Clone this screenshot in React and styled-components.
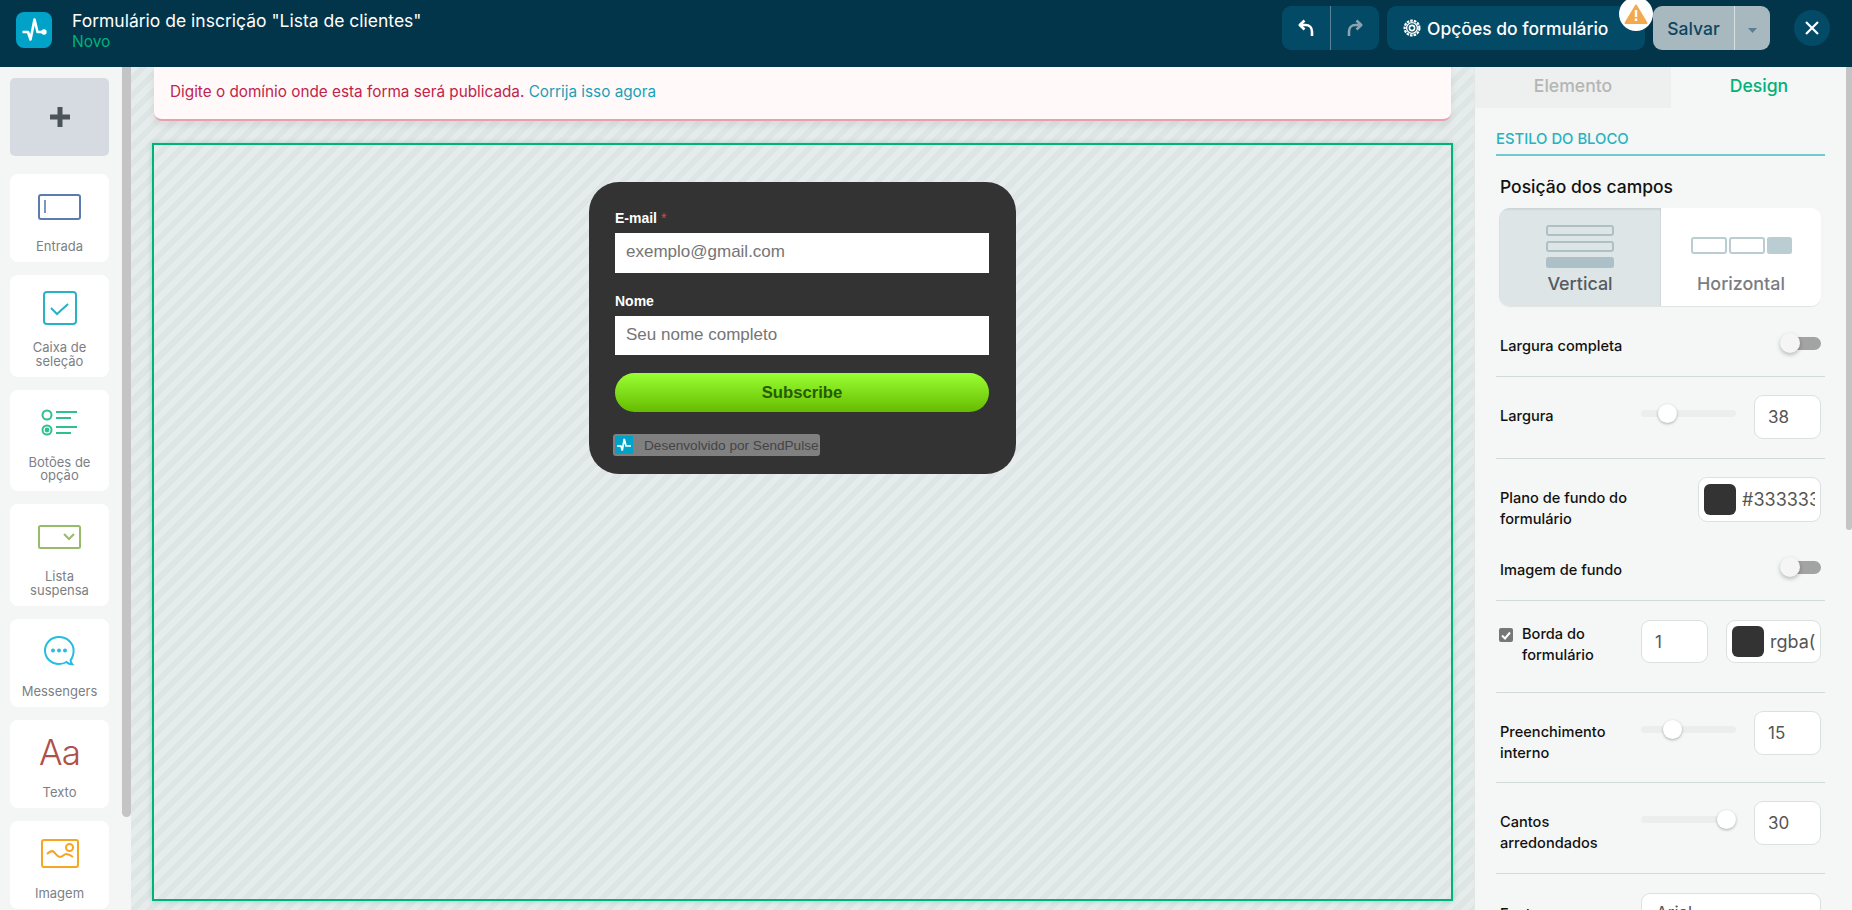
import React from 'react'
import styled, { createGlobalStyle } from 'styled-components'

const Global = createGlobalStyle`
html, body {margin:0; padding:0; height:100%; overflow:hidden;}
body {font-family:Inter, "Noto Sans", sans-serif; color:#111;}
* {box-sizing:border-box;}
`

const Page = styled.div`
width:100%; height:100vh; display:flex; flex-direction:column; overflow:hidden;
`

const Header = styled.header`
flex:0 0 67px; background:#02344a; display:flex; padding:6px 22px 0 16px;
`
const LogoBox = styled.div`
width:36px; height:36px; margin-top:6px; border-radius:8px; background:#00a3c7; flex:none;
svg {display:block;}
`
const Titles = styled.div`
margin-left:20px; flex:1; padding-top:4px;
h1 {margin:0; font-size:17.5px; line-height:22px; font-weight:400; color:#fff;}
span {display:block; font-size:15.5px; line-height:20px; color:#00b27a;}
`
const HeaderBtns = styled.div`
display:flex; gap:8px; height:44px;
`
const UndoGroup = styled.div`
width:97px; background:#034a66; border-radius:9px; display:flex;
`
const UndoBtn = styled.button`
flex:1; border:0; background:none; padding:0; display:flex; align-items:center; justify-content:center;
& + & {border-left:1px solid #5c8395;}
`
const OptionsBtn = styled.button`
position:relative; width:258px; background:#034a66; border:0; border-radius:9px; color:#fff;
font:500 17.5px Inter, sans-serif; display:flex; align-items:center; padding:0 0 0 16px; gap:6px; white-space:nowrap;
`
const WarnBadge = styled.div`
position:absolute; right:-8px; top:-9px; width:34px; height:34px; border-radius:50%; background:#fff;
display:flex; align-items:center; justify-content:center;
`
const SaveGroup = styled.div`
width:117px; background:#a8b8bf; border-radius:9px; display:flex;
`
const SaveBtn = styled.button`
flex:1; border:0; background:none; color:#0d4661; font:500 17.5px Inter, sans-serif; padding:0;
`
const SaveCaret = styled.button`
width:36px; border:0; border-left:1px solid #d8e0e3; background:none; padding:4px 0 0; display:flex; align-items:center; justify-content:center;
`
const CloseBtn = styled.button`
width:36px; height:36px; margin:4px 0 0 16px; border:0; border-radius:50%; background:#034a66; padding:0;
display:flex; align-items:center; justify-content:center;
`

const Body = styled.div`
flex:1; min-height:0; display:flex;
`

const Sidebar = styled.aside`
position:relative; flex:0 0 131px; background:#f4f6f5; padding:11px 22px 0 10px; display:flex; flex-direction:column; gap:13px;
&::after {content:""; position:absolute; top:0; right:0; width:9px; height:750px; background:#c4c4c4; border-radius:0 0 5px 5px;}
`
const AddBtn = styled.button`
flex:0 0 78px; margin-bottom:5px; border:0; border-radius:5px; background:#d5dbe0; display:flex; align-items:center; justify-content:center; padding:0;
`
const ToolCard = styled.div`
flex:none; background:#fff; border-radius:8px; padding-bottom:8.5px; text-align:center;
font-size:13px; line-height:13.5px; color:#7c7f85;
`
const ToolIcon = styled.div`
height:50px; margin:8px 0 8px; display:flex; align-items:center; justify-content:center;
`
const AaGlyph = styled.span`
font-size:35px; line-height:1; font-weight:300; color:#b0504b; letter-spacing:-1px;
`

const Canvas = styled.main`
flex:1; min-width:0; padding:0 21px;
background:repeating-linear-gradient(135deg, #e6ebeb 0 6px, #dee5e5 6px 12px);
`
const Notice = styled.div`
height:54px; margin:0 2px; padding:0 16px 4px; display:flex; align-items:center; background:#fffaf9;
border-bottom:2px solid #e8a0ae; border-radius:0 0 8px 8px; box-shadow:0 4px 8px rgba(0,0,0,.07);
font-size:15.3px; color:#c0234b; white-space:pre;
a {color:#1a9fb8; text-decoration:none;}
`
const Block = styled.section`
height:758px; margin-top:22px; border:2px solid #00b27a; box-shadow:0 0 5px rgba(0,178,122,.35); padding-top:37px;
`

const FormCard = styled.div`
width:427px; height:292px; margin:0 auto; background:#333; border-radius:30px; padding:26px 27px 0 26px;
font-family:"Liberation Sans", Arial, sans-serif;
`
const FieldLabel = styled.label`
display:block; height:20px; line-height:20px; margin-bottom:5px; font-size:14px; font-weight:700; color:#fff;
em {font-style:normal; font-weight:400; color:#d9434e; margin-left:4px;}
`
const FieldInput = styled.input`
display:block; width:100%; height:${p => p.$h}px; margin-bottom:18px; border:0; background:#fff; padding:0 11px 2px;
font:17px "Liberation Sans", Arial, sans-serif;
&::placeholder {color:#757575; opacity:1;}
`
const SubmitBtn = styled.button`
display:block; width:100%; height:39px; border:0; border-radius:20px; padding:0;
background:linear-gradient(#99ff33, #66bb00); color:#265c00; font:700 16.7px "Liberation Sans", Arial, sans-serif;
`
const Powered = styled.div`
width:207px; height:22px; margin:22px 0 0 -2px; background:#808080; border-radius:3px; padding:2px; display:flex; align-items:center; gap:11px;
font-size:13.6px; color:#444; white-space:nowrap;
svg {flex:none; display:block;}
`

const Panel = styled.aside`
position:relative; flex:0 0 378px; background:#f4f7f6; border-left:1px solid #e2e6e6; overflow:hidden;
&::after {content:""; position:absolute; top:0; right:0; width:6px; height:463px; background:#c4c4c4; border-radius:0 0 4px 4px;}
`
const Tabs = styled.div`
display:flex; height:41px;
`
const Tab = styled.div`
flex:${p => p.$active ? '1' : '0 0 196px'}; display:flex; align-items:center; justify-content:center; padding:0 ${p => p.$active ? '5px' : '0'} 4px 0;
background:${p => p.$active ? 'transparent' : '#eeefef'}; color:${p => p.$active ? '#00b27a' : '#b5b5b5'};
font-size:17.6px; font-weight:500;
`
const PanelBody = styled.div`
width:350px; padding-left:21px;
`
const SectionTitle = styled.div`
height:48px; padding-top:21px; border-bottom:2px solid #6fcbd2; font-size:14.8px; line-height:20px; font-weight:500; color:#26b2c0;
`
const SubTitle = styled.div`
margin:20px 0 0 4px; font-size:17.5px; line-height:22px; font-weight:500;
`
const Segments = styled.div`
display:flex; width:322px; height:98px; margin:10px 0 0 3px; border-radius:10px; overflow:hidden; background:#fff; box-shadow:0 1px 1px rgba(0,0,0,.08);
`
const Segment = styled.div`
flex:${p => p.$active ? '0 0 162px' : '1'}; display:flex; flex-direction:column; align-items:center; padding-top:${p => p.$active ? '17px' : '29px'};
background:${p => p.$active ? '#dde5e7' : '#fff'}; color:${p => p.$active ? '#555a60' : '#7a7d84'};
font-size:17.9px; font-weight:500; line-height:24px;
box-shadow:${p => p.$active ? 'inset 0 2px 2px rgba(0,0,0,.07), inset -1px 0 0 #d3dbdd' : 'none'};
span {margin-top:${p => p.$active ? '4px' : '18px'};}
`
const Row = styled.div`
display:flex; align-items:flex-start; padding:${p => p.$pt ?? 18}px 4px ${p => p.$pb ?? 19}px;
border-bottom:${p => p.$plain ? '0' : '1px solid #cfdad9'};
`
const Label = styled.div`
flex:1; padding-top:11px; font-size:14.6px; line-height:20.5px; font-weight:500;
`
const ToggleLabel = styled.div`
flex:1; font-size:14.6px; line-height:20px; font-weight:500;
`
const Slider = styled.div`
position:relative; flex:0 0 95px; height:7px; margin:15px 18px 0 0; border-radius:4px; background:#eceeee;
i {position:absolute; top:-6px; width:19px; height:19px; margin-left:-9.5px; border-radius:50%; background:#fff; box-shadow:0 1px 3px rgba(0,0,0,.3);}
`
const NumBox = styled.input`
flex:0 0 67px; width:67px; height:${p => p.$h ?? 44}px; padding:0 13px; border:1px solid #dbe0e0; border-radius:9px; background:#fff;
font:17px Inter, sans-serif; color:#555;
`
const ColorBox = styled.div`
flex:0 0 auto; width:${p => p.$w}px; height:${p => p.$h ?? 45}px; padding:6px 5px; margin-left:${p => p.$ml ?? 0}px; border:1px solid #dbe0e0; border-radius:9px; background:#fff;
display:flex; align-items:center; gap:6px;
i {flex:none; width:32px; height:31px; border-radius:6px; background:#333;}
`
const ColorText = styled.input`
flex:1; min-width:0; width:100%; border:0; padding:0; background:none; font:18px Inter, sans-serif; color:#555;
`
const Toggle = styled.div`
position:relative; flex:none; width:36px; height:13px; margin-top:1px; border-radius:7px; background:#a3a3a3;
i {position:absolute; left:-5px; top:-4px; width:20px; height:20px; border-radius:50%; background:#f5f5f5; box-shadow:0 2px 4px rgba(0,0,0,.25);}
`
const CheckMark = styled.div`
flex:none; width:14px; height:14px; margin:8px 9px 0 -1px; border-radius:2px; background:#777; display:flex; align-items:center; justify-content:center;
`
const BorderLabel = styled(Label)`
flex:0 0 119px; padding-top:4px;
`
const SelectBox = styled.div`
flex:0 0 180px; height:44px; padding:0 14px; border:1px solid #dbe0e0; border-radius:9px; background:#fff; line-height:38px; font-size:17px; color:#555;
`

const PulseLogo = ({ size }) => (
  <svg width={size} height={size} viewBox="0 0 36 36" fill="none">
    <path d="M6.5 20H12L14.500 27.500 18.500 7.500 21.500 20h6.500" stroke="#fff" strokeWidth="2.600" strokeLinejoin="round" />
    <circle cx="28" cy="20" r="2.700" fill="#fff" />
  </svg>
)

const TurnArrow = ({ color, flip }) => (
  <svg width="16" height="18" viewBox="0 0 16 18" fill="none" style={flip ? { transform: 'scaleX(-1)' } : undefined}>
    <path d="M6.5 1.5 1.8 6l4.7 4.5" stroke={color} strokeWidth="2.6" strokeLinejoin="round" />
    <path d="M2 6h5.5c4 0 6.5 3 6.5 6.5V17" stroke={color} strokeWidth="2.6" />
  </svg>
)

const Gear = () => (
  <svg width="18" height="18" viewBox="0 0 18 18" fill="none">
    <circle cx="9" cy="9" r="7.4" stroke="#fff" strokeWidth="2.2" strokeDasharray="2.6 1.05" />
    <circle cx="9" cy="9" r="5.4" stroke="#fff" strokeWidth="1.4" />
    <circle cx="9" cy="9" r="2.6" stroke="#fff" strokeWidth="1.6" />
  </svg>
)

const VerticalIcon = () => (
  <svg width="68" height="43" viewBox="0 0 68 43" fill="none">
    <rect x="1" y="1" width="66" height="9" rx="2" stroke="#acc1c7" strokeWidth="2" />
    <rect x="1" y="17" width="66" height="9" rx="2" stroke="#acc1c7" strokeWidth="2" />
    <rect y="32" width="68" height="11" rx="2.5" fill="#acc1c7" />
  </svg>
)

const HorizontalIcon = () => (
  <svg width="101" height="17" viewBox="0 0 101 17" fill="none">
    <rect x="1" y="1" width="34" height="15" rx="2" stroke="#bacdd2" strokeWidth="2" />
    <rect x="39" y="1" width="34" height="15" rx="2" stroke="#bacdd2" strokeWidth="2" />
    <rect x="76" width="25" height="17" rx="2.5" fill="#bacdd2" />
  </svg>
)

const tools = [
  {
    label: 'Entrada',
    icon: (
      <svg width="43" height="26" viewBox="0 0 43 26" fill="none">
        <rect x="1" y="1" width="41" height="24" rx="2" stroke="#5b7dad" strokeWidth="2" />
        <path d="M7 6v13" stroke="#5b7dad" strokeWidth="1.6" />
      </svg>
    ),
  },
  {
    label: <>Caixa de<br />seleção</>,
    icon: (
      <svg width="34" height="34" viewBox="0 0 34 34" fill="none">
        <rect x="1" y="1" width="32" height="32" rx="3" stroke="#27b2c6" strokeWidth="2" />
        <path d="M8 17l6 6 11-10" stroke="#27b2c6" strokeWidth="2" />
      </svg>
    ),
  },
  {
    label: <>Botões de<br />opção</>,
    icon: (
      <svg width="37" height="28" viewBox="0 0 37 28" fill="none" stroke="#2ec08e" strokeWidth="2">
        <circle cx="6" cy="6" r="4.5" />
        <circle cx="6" cy="21" r="4.5" />
        <circle cx="6" cy="21" r="1.4" fill="#2ec08e" />
        <path d="M15 3h21M15 9h15M15 18h21M15 24h15" />
      </svg>
    ),
  },
  {
    label: <>Lista<br />suspensa</>,
    icon: (
      <svg width="43" height="25" viewBox="0 0 43 25" fill="none">
        <rect x="1" y="1" width="41" height="22" rx="1.5" stroke="#97bb6a" strokeWidth="2" />
        <path d="M26 9l5 5 5-5" stroke="#97bb6a" strokeWidth="2" />
      </svg>
    ),
  },
  {
    label: 'Messengers',
    icon: (
      <svg width="33" height="33" viewBox="0 0 33 33" fill="none">
        <path d="M16 2C8 2 2 8 2 15.5S8 29 16 29c3 0 5.600-.8 7.500-2 1.300 1.400 3 2.200 5.700 2.200-1-1-1.500-2.300-1.600-4.200 2-2.400 3-5.500 3-9.500C30.600 8 24 2 16 2z" stroke="#25bde0" strokeWidth="2" />
        <circle cx="10" cy="15.500" r="2" fill="#25bde0" />
        <circle cx="16" cy="15.500" r="2" fill="#25bde0" />
        <circle cx="22" cy="15.500" r="2" fill="#25bde0" />
      </svg>
    ),
  },
  { label: 'Texto', icon: <AaGlyph>Aa</AaGlyph> },
  {
    label: 'Imagem',
    icon: (
      <svg width="38" height="29" viewBox="0 0 38 29" fill="none" stroke="#f5a623" strokeWidth="2">
        <rect x="1" y="1" width="36" height="27" rx="2" />
        <circle cx="28.500" cy="8.500" r="3.500" />
        <path d="M6 15c3-3 5-4 7-2s3 5 6 5 4-3 6-3 4 1 7 3" />
      </svg>
    ),
  },
]

const App = () => {
  return (
    <Page>
      <Global />
      <Header>
        <LogoBox><PulseLogo size={36} /></LogoBox>
        <Titles>
          <h1>Formulário de inscrição "Lista de clientes"</h1>
          <span>Novo</span>
        </Titles>
        <HeaderBtns>
          <UndoGroup>
            <UndoBtn><TurnArrow color="#fff" /></UndoBtn>
            <UndoBtn><TurnArrow color="#8aa5b0" flip /></UndoBtn>
          </UndoGroup>
          <OptionsBtn>
            <Gear />
            Opções do formulário
            <WarnBadge>
              <svg width="24" height="20" viewBox="0 0 24 20">
                <path d="M12 1.500 22.500 19h-21z" fill="#f4a94e" stroke="#f4a94e" strokeWidth="2" strokeLinejoin="round" />
                <path d="M10.800 6h2.400v7h-2.400zM10.800 14.500h2.400V17h-2.400z" fill="#fff" />
              </svg>
            </WarnBadge>
          </OptionsBtn>
          <SaveGroup>
            <SaveBtn>Salvar</SaveBtn>
            <SaveCaret>
              <svg width="9" height="5" viewBox="0 0 9 5"><path d="M0 0h9L4.500 5z" fill="#5a7f90" /></svg>
            </SaveCaret>
          </SaveGroup>
          <CloseBtn>
            <svg width="14" height="14" viewBox="0 0 14 14"><path d="M1 1l12 12M13 1 1 13" stroke="#fff" strokeWidth="2.200" /></svg>
          </CloseBtn>
        </HeaderBtns>
      </Header>
      <Body>
        <Sidebar>
          <AddBtn>
            <svg width="20" height="20" viewBox="0 0 20 20"><path d="M7.500 0h5v7.500H20v5h-7.500V20h-5v-7.500H0v-5h7.500z" fill="#4b5459" /></svg>
          </AddBtn>
          {tools.map((tool, i) => (
            <ToolCard key={i}>
              <ToolIcon>{tool.icon}</ToolIcon>
              {tool.label}
            </ToolCard>
          ))}
        </Sidebar>
        <Canvas>
          <Notice>Digite o domínio onde esta forma será publicada. <a href="#fix">Corrija isso agora</a></Notice>
          <Block>
            <FormCard>
              <FieldLabel>E-mail<em>*</em></FieldLabel>
              <FieldInput $h={40} placeholder="exemplo@gmail.com" readOnly />
              <FieldLabel>Nome</FieldLabel>
              <FieldInput $h={39} placeholder="Seu nome completo" readOnly />
              <SubmitBtn>Subscribe</SubmitBtn>
              <Powered>
                <svg width="18" height="18" viewBox="0 0 36 36"><rect width="36" height="36" fill="#00a3c7" /><path d="M4 20H12L14.500 29 18.500 6 22 20h10" stroke="#fff" strokeWidth="3.400" fill="none" /></svg>
                Desenvolvido por SendPulse
              </Powered>
            </FormCard>
          </Block>
        </Canvas>
        <Panel>
          <Tabs>
            <Tab>Elemento</Tab>
            <Tab $active>Design</Tab>
          </Tabs>
          <PanelBody>
            <SectionTitle>ESTILO DO BLOCO</SectionTitle>
            <SubTitle>Posição dos campos</SubTitle>
            <Segments>
              <Segment $active><VerticalIcon /><span>Vertical</span></Segment>
              <Segment><HorizontalIcon /><span>Horizontal</span></Segment>
            </Segments>
            <Row $pt={30} $pb={20}>
              <ToggleLabel>Largura completa</ToggleLabel>
              <Toggle><i /></Toggle>
            </Row>
            <Row>
              <Label>Largura</Label>
              <Slider><i style={{ left: '28%' }} /></Slider>
              <NumBox readOnly value="38" />
            </Row>
            <Row $pb={31} $plain>
              <Label>Plano de fundo do<br />formulário</Label>
              <ColorBox $w={123}><i /><ColorText readOnly value="#333333" /></ColorBox>
            </Row>
            <Row $pt={0} $pb={20}>
              <ToggleLabel>Imagem de fundo</ToggleLabel>
              <Toggle><i /></Toggle>
            </Row>
            <Row $pt={19} $pb={27}>
              <CheckMark>
                <svg width="10" height="9" viewBox="0 0 10 9"><path d="M1 4.500l3 3 5-6" stroke="#fff" strokeWidth="2" fill="none" /></svg>
              </CheckMark>
              <BorderLabel>Borda do<br />formulário</BorderLabel>
              <NumBox $h={43} readOnly value="1" />
              <ColorBox $w={95} $h={43} $ml={18}><i /><ColorText readOnly value="rgba(51,51,51,1)" /></ColorBox>
            </Row>
            <Row $pb={19}>
              <Label>Preenchimento<br />interno</Label>
              <Slider><i style={{ left: '33%' }} /></Slider>
              <NumBox readOnly value="15" />
            </Row>
            <Row $pb={20}>
              <Label>Cantos<br />arredondados</Label>
              <Slider><i style={{ left: '90%' }} /></Slider>
              <NumBox readOnly value="30" />
            </Row>
            <Row $pt={19} $plain>
              <Label>Fonte</Label>
              <SelectBox>Arial</SelectBox>
            </Row>
          </PanelBody>
        </Panel>
      </Body>
    </Page>
  )
}

export default App
